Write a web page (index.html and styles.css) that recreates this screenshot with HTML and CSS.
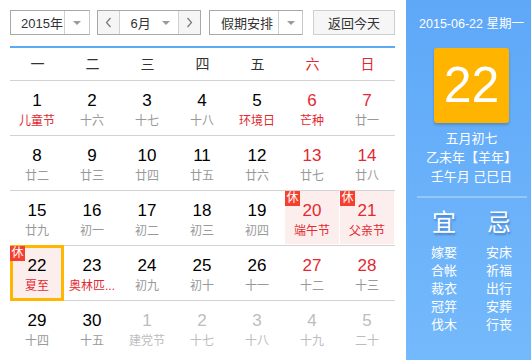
FILE: index.html
```html
<!DOCTYPE html>
<html lang="zh-CN">
<head>
    <meta charset="UTF-8">
    <title>万年历</title>
    <link rel="stylesheet" href="styles.css">
</head>
<body>
    <div class="calendar">
        <div class="main">
            <!-- 工具栏 -->
            <div class="toolbar">
                <div class="select year">
                    <span class="select-text">2015年</span>
                    <span class="select-arrow"><i class="caret"></i></span>
                </div>
                <div class="month">
                    <span class="nav"><svg width="7" height="11" viewBox="0 0 7 11"><polyline points="5.5,1 1.5,5.5 5.5,10" fill="none" stroke="#777" stroke-width="1.2"/></svg></span>
                    <span class="month-text">6月<i class="caret"></i></span>
                    <span class="nav"><svg width="7" height="11" viewBox="0 0 7 11"><polyline points="1.5,1 5.5,5.5 1.5,10" fill="none" stroke="#777" stroke-width="1.2"/></svg></span>
                </div>
                <div class="select holiday">
                    <span class="select-text">假期安排</span>
                    <span class="select-arrow"><i class="caret"></i></span>
                </div>
                <div class="today-btn">返回今天</div>
            </div>

            <!-- 星期 -->
            <div class="week">
                <span>一</span><span>二</span><span>三</span><span>四</span><span>五</span>
                <span class="red">六</span><span class="red">日</span>
            </div>

            <!-- 日期 -->
            <div class="days">
                <div class="day"><div class="cell"><div class="num">1</div><div class="lunar red">儿童节</div></div></div>
                <div class="day"><div class="cell"><div class="num">2</div><div class="lunar">十六</div></div></div>
                <div class="day"><div class="cell"><div class="num">3</div><div class="lunar">十七</div></div></div>
                <div class="day"><div class="cell"><div class="num">4</div><div class="lunar">十八</div></div></div>
                <div class="day"><div class="cell"><div class="num">5</div><div class="lunar red">环境日</div></div></div>
                <div class="day weekend"><div class="cell"><div class="num">6</div><div class="lunar red">芒种</div></div></div>
                <div class="day weekend"><div class="cell"><div class="num">7</div><div class="lunar">廿一</div></div></div>

                <div class="day"><div class="cell"><div class="num">8</div><div class="lunar">廿二</div></div></div>
                <div class="day"><div class="cell"><div class="num">9</div><div class="lunar">廿三</div></div></div>
                <div class="day"><div class="cell"><div class="num">10</div><div class="lunar">廿四</div></div></div>
                <div class="day"><div class="cell"><div class="num">11</div><div class="lunar">廿五</div></div></div>
                <div class="day"><div class="cell"><div class="num">12</div><div class="lunar">廿六</div></div></div>
                <div class="day weekend"><div class="cell"><div class="num">13</div><div class="lunar">廿七</div></div></div>
                <div class="day weekend"><div class="cell"><div class="num">14</div><div class="lunar">廿八</div></div></div>

                <div class="day"><div class="cell"><div class="num">15</div><div class="lunar">廿九</div></div></div>
                <div class="day"><div class="cell"><div class="num">16</div><div class="lunar">初一</div></div></div>
                <div class="day"><div class="cell"><div class="num">17</div><div class="lunar">初二</div></div></div>
                <div class="day"><div class="cell"><div class="num">18</div><div class="lunar">初三</div></div></div>
                <div class="day"><div class="cell"><div class="num">19</div><div class="lunar">初四</div></div></div>
                <div class="day weekend rest"><div class="cell"><span class="badge">休</span><div class="num">20</div><div class="lunar red">端午节</div></div></div>
                <div class="day weekend rest"><div class="cell"><span class="badge">休</span><div class="num">21</div><div class="lunar red">父亲节</div></div></div>

                <div class="day rest today"><div class="cell"><span class="badge">休</span><div class="num">22</div><div class="lunar red">夏至</div></div></div>
                <div class="day"><div class="cell"><div class="num">23</div><div class="lunar red">奥林匹...</div></div></div>
                <div class="day"><div class="cell"><div class="num">24</div><div class="lunar">初九</div></div></div>
                <div class="day"><div class="cell"><div class="num">25</div><div class="lunar">初十</div></div></div>
                <div class="day"><div class="cell"><div class="num">26</div><div class="lunar">十一</div></div></div>
                <div class="day weekend"><div class="cell"><div class="num">27</div><div class="lunar">十二</div></div></div>
                <div class="day weekend"><div class="cell"><div class="num">28</div><div class="lunar">十三</div></div></div>

                <div class="day"><div class="cell"><div class="num">29</div><div class="lunar">十四</div></div></div>
                <div class="day"><div class="cell"><div class="num">30</div><div class="lunar">十五</div></div></div>
                <div class="day other"><div class="cell"><div class="num">1</div><div class="lunar">建党节</div></div></div>
                <div class="day other"><div class="cell"><div class="num">2</div><div class="lunar">十七</div></div></div>
                <div class="day other"><div class="cell"><div class="num">3</div><div class="lunar">十八</div></div></div>
                <div class="day other"><div class="cell"><div class="num">4</div><div class="lunar">十九</div></div></div>
                <div class="day other"><div class="cell"><div class="num">5</div><div class="lunar">二十</div></div></div>
            </div>
        </div>

        <!-- 右侧详情 -->
        <div class="side">
            <div class="side-date">2015-06-22 星期一</div>
            <div class="side-day">22</div>
            <div class="side-lunar">
                <div>五月初七</div>
                <div>乙未年【羊年】</div>
                <div>壬午月 己巳日</div>
            </div>
            <div class="side-rule"></div>
            <div class="almanac">
                <div class="almanac-col">
                    <div class="almanac-title">宜</div>
                    <div>嫁娶</div><div>合帐</div><div>裁衣</div><div>冠笄</div><div>伐木</div>
                </div>
                <div class="almanac-col">
                    <div class="almanac-title">忌</div>
                    <div>安床</div><div>祈福</div><div>出行</div><div>安葬</div><div>行丧</div>
                </div>
            </div>
        </div>
    </div>
</body>
</html>
```

FILE: styles.css
```css
* { margin: 0; padding: 0; box-sizing: border-box; }
body { font-family: "Liberation Sans", "Noto Sans CJK SC", sans-serif; background: #fff; color: #333; overflow: hidden; }
.calendar { display: flex; width: 531px; height: 360px; }

/* 左侧 */
.main { width: 406px; padding: 10px 11px 0 10px; }
.toolbar { display: flex; height: 25px; font-size: 13px; }
.select { display: flex; height: 25px; border: 1px solid #a8a8a8; border-right-color: #c8c8c8; background: #fff; }
.select-text { display: flex; align-items: center; padding-left: 10px; border-right: 1px solid #d0d0d0; }
.select-arrow { display: flex; align-items: center; justify-content: center; }
.year { width: 80px; }
.year .select-text { width: 54px; }
.year .select-arrow { width: 24px; }
.holiday { width: 94px; margin-left: 8px; }
.holiday .select-text { width: 69px; padding-left: 11px; }
.holiday .select-arrow { width: 23px; }
.caret { display: inline-block; width: 0; height: 0; border-left: 4px solid transparent; border-right: 4px solid transparent; border-top: 4px solid #9a9a9a; }
.month { display: flex; width: 104px; height: 25px; margin-left: 7px; border: 1px solid #a8a8a8; }
.nav { display: flex; align-items: center; justify-content: center; width: 22px; background: #f5f5f5; }
.month-text { display: flex; align-items: center; justify-content: space-between; width: 60px; padding: 0 8px 0 10px; border-left: 1px solid #d0d0d0; border-right: 1px solid #d0d0d0; }
.today-btn { display: flex; align-items: center; justify-content: center; width: 82px; height: 25px; margin-left: 10px; border: 1px solid #cfcfcf; background: #f6f6f6; }

.week { display: grid; grid-template-columns: repeat(7, 55px); height: 34px; margin-top: 11px; border-top: 2px solid #5aaaf5; font-size: 14px; line-height: 32px; text-align: center; color: #333; }
.red { color: #e4282f; }

.days { display: grid; grid-template-columns: repeat(7, 55px); }
.day { height: 55px; border-top: 1px solid #d2d2d2; }
.cell { position: relative; height: 53px; margin-right: 1px; padding-top: 9px; text-align: center; }
.num { font-size: 17px; line-height: 22px; color: #000; }
.lunar { font-size: 12px; line-height: 18px; color: #999; white-space: nowrap; }
.lunar.red { color: #e4282f; }
.weekend .num { color: #e4282f; }
.other .num, .other .lunar { color: #bdbdbd; }
.rest .cell { background: #fdeeee; }
.badge { position: absolute; top: 0; left: 0; z-index: 2; width: 15px; height: 15px; background: #f5402f; color: #fff; font-size: 12px; line-height: 15px; text-align: center; }
.today .cell::after { content: ""; position: absolute; top: -1px; left: 0; right: 0; bottom: -2px; border: 3px solid #ffb600; }

/* 右侧 */
.side { width: 125px; padding: 15px 0 0 6px; background: linear-gradient(#5ea8f8, #74b9fb); color: #fff; text-align: center; }
.side-date { font-size: 12.5px; line-height: 18px; white-space: nowrap; }
.side-day { width: 75px; height: 75px; margin: 15px auto 0; border-radius: 3px; background: #ffb400; box-shadow: 0 2px 3px rgba(0, 0, 0, 0.2); font-size: 50px; line-height: 75px; }
.side-lunar { margin-top: 6px; font-size: 13px; line-height: 19px; }
.side-rule { width: 110px; height: 2px; margin: 10px auto 0; background: #94c8fb; }
.almanac { display: flex; justify-content: center; margin-top: 11px; }
.almanac-col { width: 55px; font-size: 13px; line-height: 18px; }
.almanac-title { margin-bottom: 7px; font-size: 24px; line-height: 28px; text-shadow: 1px 2px 2px rgba(0, 40, 120, 0.35); }
```
